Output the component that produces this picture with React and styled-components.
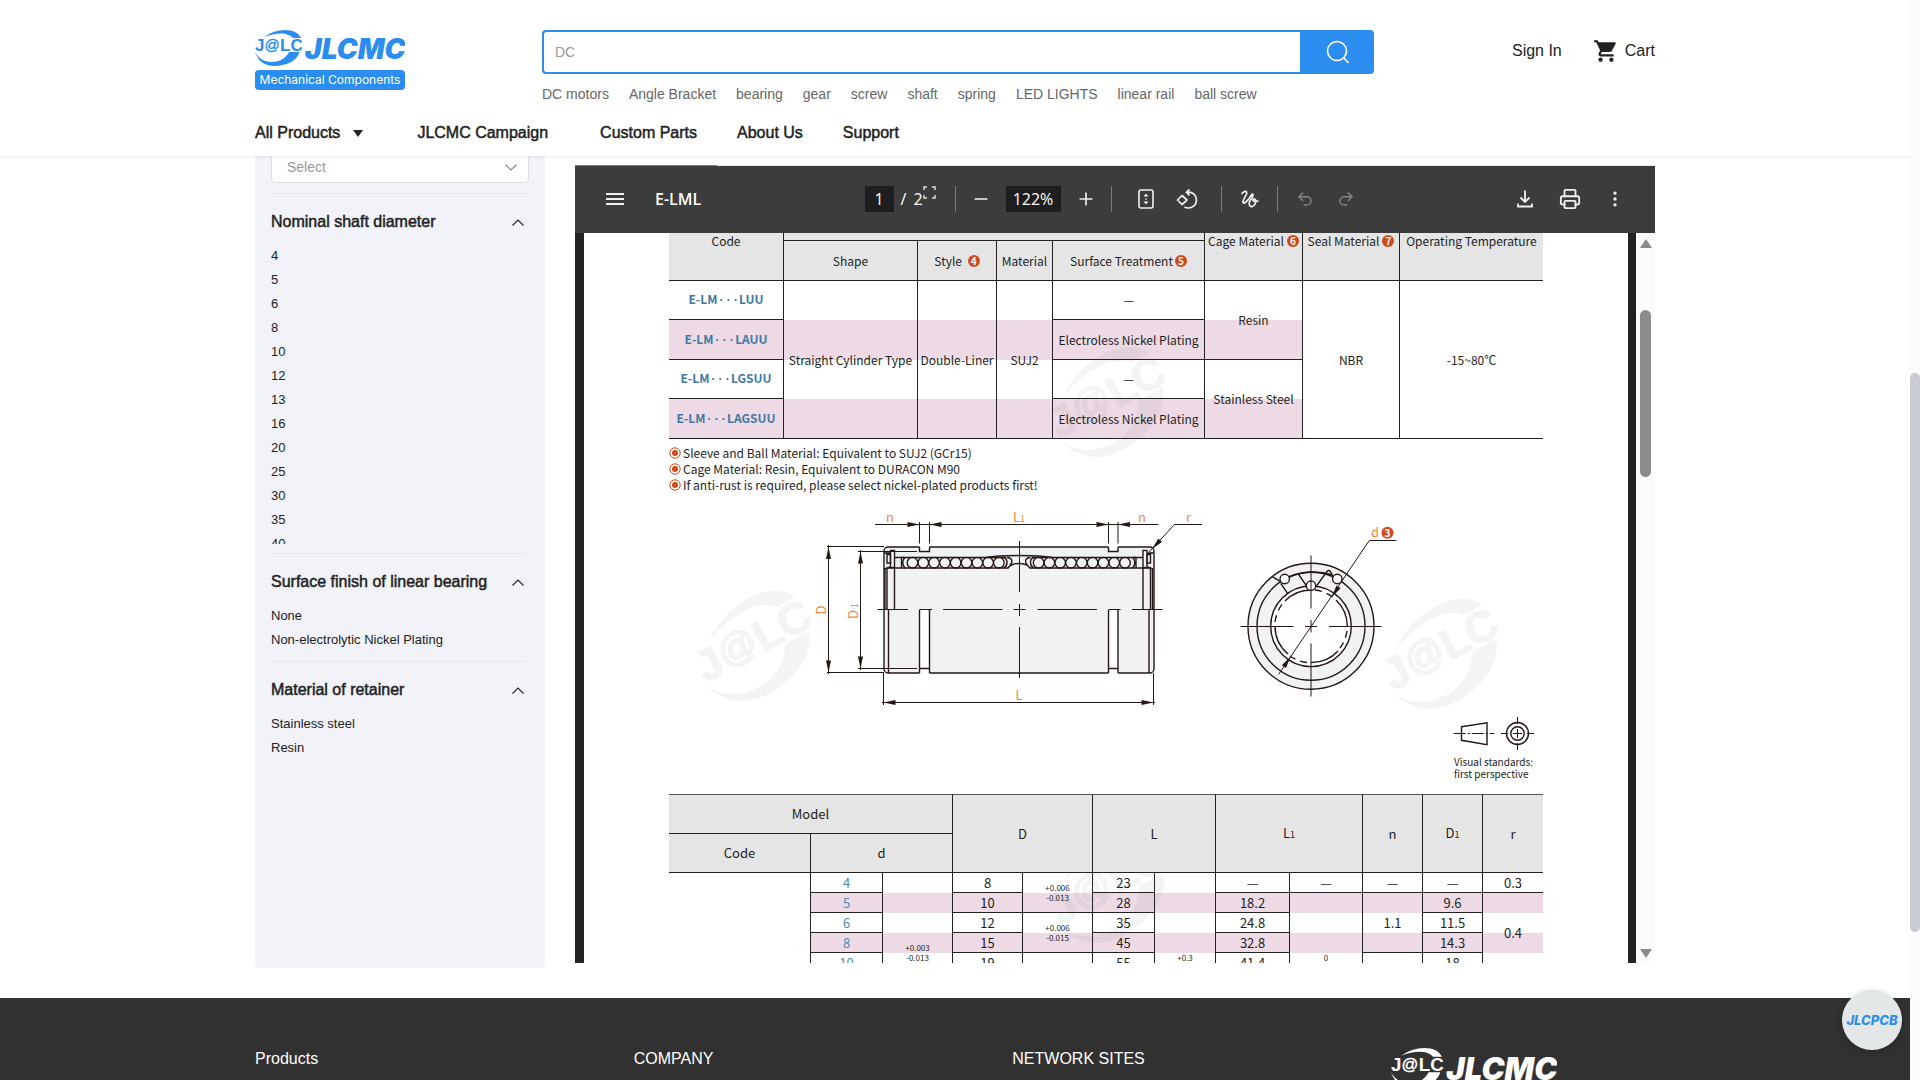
import React from 'react';
import styled, { createGlobalStyle, css } from 'styled-components';
import { MdShoppingCart } from 'react-icons/md';
import { Minus, Plus, Undo2, Redo2, Printer, EllipsisVertical } from 'lucide-react';

const BLUE = '#2b8def';
const INK = '#231815';
const PINK = '#eedae5';

const GlobalStyle = createGlobalStyle`
  * {
    box-sizing: border-box;
  }
  body {
    margin: 0;
    background: #fff;
    color: #222;
    font-family: 'Liberation Sans', Arial, sans-serif;
  }
  button, input, select {
    font-family: inherit;
  }
  button {
    border: 0;
    padding: 0;
    background: none;
    color: inherit;
    cursor: pointer;
  }
  ul {
    list-style: none;
    margin: 0;
    padding: 0;
  }
  a {
    color: inherit;
    text-decoration: none;
  }
`;

const Shell = styled.div`
  display: flex;
  height: 100vh;
  overflow: hidden;
`;

const Page = styled.div`
  position: relative;
  flex: 1;
  min-width: 0;
  overflow: hidden;
`;

const Container = styled.div`
  max-width: 1400px;
  margin: 0 auto;
`;

/* ---------- header ---------- */

const Header = styled.header`
  position: relative;
  z-index: 5;
  height: 156px;
  padding-top: 30px;
  background: #fff;
  box-shadow: 0 1px 3px rgba(0, 0, 0, 0.08);
`;

const HeaderTop = styled.div`
  display: flex;
  align-items: flex-start;
  height: 80px;
`;

const Brand = styled.a`
  display: flex;
  flex-direction: column;
  gap: 4px;
  width: 150px;
  margin-right: 137px;
`;

const BrandTag = styled.span`
  height: 20px;
  border-radius: 4px;
  background: ${BLUE};
  color: #fff;
  font-family: Inter, sans-serif;
  font-size: 12px;
  line-height: 20px;
  text-align: center;
  white-space: nowrap;
`;

const SearchColumn = styled.div`
  flex: 0 1 832px;
`;

const SearchForm = styled.form`
  display: flex;
  height: 44px;
`;

const SearchInput = styled.input`
  flex: 1;
  min-width: 0;
  padding: 0 11px;
  border: 2px solid ${BLUE};
  border-right: 0;
  border-radius: 4px 0 0 4px;
  font-size: 14px;
  outline: none;
  &::placeholder {
    color: #999;
  }
`;

const SearchButton = styled.button`
  display: flex;
  align-items: center;
  justify-content: center;
  width: 74px;
  border-radius: 0 4px 4px 0;
  background: ${BLUE};
`;

const HotWords = styled.div`
  display: flex;
  gap: 20px;
  margin-top: 10px;
  color: #666;
  font-size: 14px;
  line-height: 20px;
`;

const Account = styled.div`
  display: flex;
  align-items: center;
  gap: 6px;
  height: 42px;
  margin-left: auto;
  font-size: 16px;
`;

const SignIn = styled.a`
  margin-right: 25px;
`;

const Nav = styled.nav`
  display: flex;
  gap: 40px;
  margin-top: 13px;
  font-size: 16px;
  line-height: 20px;
`;

const NavLink = styled.a`
  display: flex;
  align-items: center;
  gap: 13px;
  -webkit-text-stroke: 0.03em currentColor;
  padding: ${p => (p.$wide ? '0 12px 0 14px' : '0')};
`;

const Caret = styled.span`
  border: 5px solid transparent;
  border-top: 7px solid #222;
  border-bottom: 0;
`;

/* ---------- filters ---------- */

const Content = styled(Container)`
  display: flex;
  gap: 30px;
  margin-top: -8px;
  padding-bottom: 30px;
`;

const Sidebar = styled.aside`
  flex: 0 0 290px;
  padding: 3px 16px 0;
  border-radius: 4px;
  background: #f1f3f8;
`;

const SelectRow = styled.div`
  padding-bottom: 10px;
  border-bottom: 1px solid #e4e6eb;
`;

const SelectBox = styled.label`
  display: flex;
  align-items: center;
  position: relative;
  color: #888;
  svg {
    position: absolute;
    right: 12px;
    pointer-events: none;
  }
`;

const Select = styled.select`
  appearance: none;
  width: 100%;
  height: 32px;
  padding: 0 15px;
  border: 1px solid #dcdfe6;
  border-radius: 4px;
  background: #fff;
  color: #999;
  font-size: 14px;
`;

const FilterSection = styled.section`
  margin-right: 3px;
  padding: 18px 0 9px;
  & + & {
    border-top: 1px solid #e4e6eb;
  }
`;

const FilterTitle = styled.button`
  display: flex;
  align-items: center;
  justify-content: space-between;
  width: 100%;
  height: 20px;
  margin-bottom: 12px;
  padding-right: 2px;
  font-size: 16px;
  -webkit-text-stroke: 0.03em currentColor;
`;

const FilterList = styled.ul`
  max-height: 300px;
  overflow: hidden;
`;

const FilterItem = styled.button`
  display: block;
  height: 24px;
  font-size: 13px;
  line-height: 24px;
`;

/* ---------- pdf viewer ---------- */

const Viewer = styled.main`
  flex: 1;
  min-width: 0;
  margin-top: 17px;
  padding-bottom: 5px;
`;

const TabLine = styled.div`
  height: 1px;
  background: linear-gradient(to right, ${BLUE} 142px, #e4e7ed 142px);
`;

const Toolbar = styled.div`
  display: flex;
  align-items: center;
  height: 67px;
  padding: 0 24px 2px;
  background: #3c3c3c;
  color: #fff;
  font-family: 'Open Sans', 'Noto Sans', sans-serif;
  font-size: 16px;
`;

const ToolbarSide = styled.div`
  display: flex;
  flex: 1;
  align-items: center;
  justify-content: ${p => (p.$end ? 'flex-end' : 'flex-start')};
  gap: ${p => (p.$end ? '13px' : '24px')};
`;

const DocTitle = styled.span`
  font-weight: 600;
`;

const ToolbarCenter = styled.div`
  display: flex;
  align-items: center;
  gap: 9px;
  padding-right: 4px;
`;

const PageNav = styled.div`
  position: relative;
  display: flex;
  align-items: center;
  gap: 7px;
  width: 81px;
`;

const DarkInput = styled.input`
  width: ${p => p.$w}px;
  height: 26px;
  padding: 0;
  border: 0;
  background: #1e1e1e;
  color: #fff;
  font-size: 16px;
  text-align: center;
`;

const FullscreenMark = styled.svg`
  position: absolute;
  left: 58px;
  top: 0;
`;

const ToolButton = styled.button`
  display: flex;
  align-items: center;
  justify-content: center;
  width: 32px;
  height: 32px;
  color: ${p => (p.$off ? '#858585' : '#f0f0f0')};
`;

const Separator = styled.span`
  width: 1px;
  height: 26px;
  margin: 0 ${p => p.$after || 0}px 0 ${p => p.$before || 0}px;
  background: #7a7a7a;
`;

const Stage = styled.div`
  display: flex;
  height: calc(100vh - 350px);
  padding-left: 9px;
  background: #232323;
  overflow: hidden;
`;

const Sheet = styled.article`
  position: relative;
  flex: 1;
  min-width: 0;
  height: 900px;
  margin-top: -32px;
  padding: 0 85px;
  background: #fff;
  color: #221e1f;
  font-family: 'Noto Sans CJK SC', sans-serif;
  font-size: 12px;
`;

const StageScroll = styled.div`
  display: flex;
  flex-direction: column;
  align-items: center;
  width: 19px;
  margin-left: 8px;
  padding: 6px 0 5px;
  background: #fcfcfc;
`;

const StageThumb = styled.div`
  width: 11px;
  height: 167px;
  margin: 62px 0 auto;
  border-radius: 6px;
  background: #8b8b8b;
`;

const Arrow = styled.span`
  border: 6px solid transparent;
  ${p => (p.$up ? 'border-top: 0; border-bottom: 9px solid #8b8b8b;' : 'border-bottom: 0; border-top: 9px solid #8b8b8b;')}
`;

const SpecTable = styled.table`
  width: 100%;
  table-layout: fixed;
  border-spacing: 0;
  font-size: ${p => (p.$large ? '13px' : '12px')};
  line-height: 16px;
  text-align: center;
`;

const TypeBody = styled.tbody`
  tr {
    height: 39px;
  }
  tr:nth-child(even) {
    height: 40px;
  }
`;

const SizeBody = styled.tbody`
  tr {
    height: 20px;
  }
`;

const Th = styled.th`
  position: relative;
  z-index: 2;
  height: ${p => p.$h || 40}px;
  padding: 0;
  border-bottom: 1px solid #222;
  border-left: ${p => (p.$first ? '0' : '1px solid #222')};
  border-top: ${p => (p.$top ? '1px solid #555' : '0')};
  background: #e5e5e5;
  font-weight: 400;
  white-space: nowrap;
`;

// cells that span several rows keep the row striping through a gradient
const stripes = {
  tall: `repeating-linear-gradient(transparent 0 39px, ${PINK} 39px 79px)`,
  even: `repeating-linear-gradient(transparent 0 20px, ${PINK} 20px 40px)`,
  odd: `repeating-linear-gradient(${PINK} 0 20px, transparent 20px 40px)`,
  pink: PINK,
};

const Td = styled.td`
  padding: 0;
  border-bottom: 1px solid #222;
  border-left: ${p => (p.$first ? '0' : '1px solid #222')};
  background: ${p => stripes[p.$bg] || 'none'};
  white-space: nowrap;
  ${p => p.$code && css`
    color: #4179a3;
    font-weight: 700;
  `}
  ${p => p.$size && css`
    color: #4f8cb5;
  `}
  ${p => p.$tol && css`
    font-size: 8px;
    line-height: 10px;
  `}
`;

const Dots = styled.span`
  font-family: 'Liberation Mono', monospace;
`;

const Sub = styled.span`
  font-size: 9px;
`;

const Badge = styled.span`
  display: inline-block;
  width: 12px;
  height: 12px;
  margin-left: ${p => (p.$tight ? '2px' : '3px')};
  border-radius: 50%;
  background: #d2491a;
  color: #fff;
  font-size: 10px;
  font-weight: 700;
  line-height: 12px;
  vertical-align: 1px;
`;

const Notes = styled.ul`
  margin-top: 6px;
  line-height: 16px;
`;

const Note = styled.li`
  display: flex;
  align-items: center;
  gap: 2px;
`;

const Figure = styled.figure`
  margin: 7px 0 14px;
`;

const Drawing = styled.svg`
  display: block;
  width: 100%;
  height: 256px;
`;

const Caption = styled.figcaption`
  width: 89px;
  margin-left: auto;
  font-size: 10px;
  line-height: 12px;
  white-space: nowrap;
`;

const WatermarkSvg = styled.svg`
  position: absolute;
  z-index: 1;
  left: ${p => p.$x}px;
  top: ${p => p.$y}px;
  pointer-events: none;
`;

/* ---------- footer ---------- */

const Footer = styled.footer`
  height: 200px;
  padding-top: 50px;
  background: #313131;
  color: #fff;
`;

const FooterColumns = styled(Container)`
  display: flex;
  justify-content: space-between;
`;

const FooterColumn = styled.div`
  width: 264px;
  font-size: 16px;
  line-height: 22px;
`;

const PcbButton = styled.a`
  position: absolute;
  z-index: 6;
  right: 8px;
  bottom: 30px;
  display: flex;
  align-items: center;
  justify-content: center;
  width: 60px;
  height: 60px;
  border-radius: 50%;
  background: #e3e7e8;
  box-shadow: 0 2px 6px rgba(0, 0, 0, 0.2);
  color: ${BLUE};
  font-family: Inter, sans-serif;
  font-size: 13px;
  font-style: italic;
  font-weight: 800;
`;

const PageScroll = styled.div`
  display: flex;
  flex-direction: column;
  width: 10px;
  background: #fcfcfc;
`;

const PageThumb = styled.div`
  height: 559px;
  margin-top: 373px;
  border-radius: 5px;
  background: #c8cbd2;
`;

/* ---------- drawings ---------- */

function Chevron({ down }) {
  return (
    <svg width="12" height="7" viewBox="0 0 12 7" fill="none" stroke="currentColor" strokeWidth="1.1">
      <path d={down ? 'M0.5 0.5 L6 6 L11.5 0.5' : 'M0.5 6.5 L6 1 L11.5 6.5'} />
    </svg>
  );
}

function JalcMark({ color, bold = 0 }) {
  return (
    <g fill={color}>
      <path d="M9 7 Q19 0 30 0 C38 0 44 3 46 8 L38 8 Q34 3.5 26 3.5 Q18 3.5 9 7 Z" />
      <path d="M0 22 C3 31 10 36 19 36 C31 36 42 31 44.5 22 L34 22 C31 28 25 32 17 32 C9 32 3 28 0 22 Z" />
      <g fontFamily="Liberation Sans" stroke={color}>
        <text x="0" y="21" fontWeight="700" fontSize="17" strokeWidth={bold}>J</text>
        <text x="9.5" y="19.5" fontSize="15" strokeWidth={0.4 + bold}>@</text>
        <text x="25" y="21" fontWeight="700" fontSize="17" strokeWidth={bold}>LC</text>
      </g>
    </g>
  );
}

function Logo({ color, width }) {
  return (
    <svg width={width} viewBox="0 0 150 36" role="img" aria-label="JLCMC">
      <JalcMark color={color} />
      <text x="50" y="29" fontFamily="Inter" fontStyle="italic" fontWeight="900" fontSize="28" fill={color}>
        JLCMC
      </text>
    </svg>
  );
}

function Watermark({ x, y }) {
  return (
    <WatermarkSvg $x={x} $y={y} width="140" height="130" viewBox="0 0 140 130" opacity="0.05">
      <g transform="translate(70 65) rotate(-28) scale(2.6) translate(-24 -18)">
        <JalcMark color="#2a4a42" bold={0.5} />
      </g>
    </WatermarkSvg>
  );
}

// filled arrow head with its tip at x,y; angle 0 points to the right
function Tip({ x, y, angle = 0, size = 12 }) {
  return <path d={`M0 0 L${-size} -2.5 L${-size} 2.5 Z`} fill={INK} stroke="none" transform={`translate(${x} ${y}) rotate(${angle})`} />;
}

function EndCap() {
  return (
    <g>
      <path d="M887 568 V610 M894.5 568 V610" />
      <rect x="890.5" y="550.5" width="4" height="17" fill="#fff" />
      <path d="M884 553 H890 M887 554.5 H890.5 V563 H887 Z M884.5 569 L890 567" />
      <path d="M894.5 557.5 H904 M901.5 557.5 V568 M905 557.5 C902 560 902 565 905 568 M885 568 V610" />
      <path d="M888.5 610 V673" />
    </g>
  );
}

function BearingDrawing() {
  const leftBalls = [912.5, 923.3, 934.1, 944.9, 955.7, 966.5, 977.3, 988.1, 998.9];
  const rightBalls = leftBalls.map(x => 2037.5 - x);
  return (
    <Drawing viewBox="669 500 874 256" fill="none" stroke={INK} strokeWidth="1.4">
      <rect x="884" y="547" width="270" height="126" rx="4" fill="#f2f2f2" />
      <g fill="#fff" stroke="none">
        <rect x="919.5" y="546" width="10" height="5.5" />
        <rect x="1108.5" y="546" width="9.5" height="5.5" />
        <rect x="919.5" y="610" width="10" height="64" />
        <rect x="1108.5" y="610" width="9.5" height="64" />
      </g>
      <path d="M919.5 547 V551.5 H929.5 V547 M1108.5 547 V551.5 H1118 V547" />
      <path d="M919.5 610 V673 M929.5 610 V673 M919.5 668.5 H929.5 M1108.5 610 V673 M1118 610 V673 M1108.5 668.5 H1118" />

      <EndCap />
      <g transform="translate(2037.5 0) scale(-1 1)">
        <EndCap />
      </g>
      <path d="M901 557.5 H1006 M1032 557.5 H1136 M887 568 H1008 C1012 562 1026 562 1030 568 H1151" />
      <path d="M986 557.5 Q996 555.5 1019 555.5 Q1042 555.5 1052 557.5" />
      {leftBalls.concat(rightBalls).map(x => (
        <circle key={x} cx={x} cy="562.7" r="5.3" />
      ))}
      <path d="M1004 557.5 C1008 559 1008 566 1004 568 M1007 557.5 C1013 558 1013 562 1010 565" />
      <path d="M1033.5 557.5 C1029.5 559 1029.5 566 1033.5 568 M1030.5 557.5 C1024.5 558 1024.5 562 1027.5 565" />

      <g strokeWidth="1">
        <path d="M877.5 609.5 H908 M919.5 609.5 H932 M943 609.5 H1002.5 M1013.5 609.5 H1025.5 M1037.5 609.5 H1097 M1108.5 609.5 H1120.5 M1132 609.5 H1162.5" />
        <path d="M1019.5 541 V592 M1019.5 604 V616 M1019.5 627 V678" />
        <path d="M875 524.5 H1158.5 M919.5 522 V543.5 M929.5 522 V543.5 M1108.5 522 V543.5 M1118 522 V543.5" />
        <path d="M827 546.5 H884 M827 672.5 H884 M828.5 545 V674" />
        <path d="M858 551.5 H917 M858 668.5 H917 M860.5 550 V670" />
        <path d="M883.5 673 V705 M1153.5 673 V705 M882 702.5 H1155" />
        <path d="M1202 524.5 H1174.5 L1149 552" />
      </g>
      <Tip x={919.5} y={524.5} />
      <Tip x={929.5} y={524.5} angle={180} />
      <Tip x={1108.5} y={524.5} />
      <Tip x={1118} y={524.5} angle={180} />
      <Tip x={828.5} y={547} angle={-90} />
      <Tip x={828.5} y={672.5} angle={90} />
      <Tip x={860.5} y={551.5} angle={-90} />
      <Tip x={860.5} y={668.5} angle={90} />
      <Tip x={883.5} y={702.5} angle={180} />
      <Tip x={1153.5} y={702.5} />
      <Tip x={1152} y={549} angle={133} />

      <circle cx="1311" cy="626.3" r="63" fill="#f2f2f2" />
      <circle cx="1311" cy="626.3" r="54" />
      <circle cx="1311" cy="626.3" r="40.3" fill="#fff" />
      <path d="M1275 626.3 A36.3 36.3 0 0 0 1288 654 M1285 601 A36.3 36.3 0 0 1 1311 590 M1336 600 A36.3 36.3 0 0 1 1347.3 626 M1338 651 A36.3 36.3 0 0 1 1311 662.5" />
      <path d="M1275 622 A36.3 36.3 0 0 1 1284 602 M1315 590 A36.3 36.3 0 0 1 1334 598 M1347 631 A36.3 36.3 0 0 1 1340 648 M1307 662.5 A36.3 36.3 0 0 1 1290 656" strokeDasharray="7 5" />
      <path d="M1272.3 576.7 L1280.7 581.7 M1280.7 583.3 L1287.7 593.7 M1289.3 577 Q1311 568 1333 575 M1298.3 574 L1307 586.7 M1316 586.7 L1327 571.5 Q1329 569 1331 572.5 L1333.3 577.3" />
      <g fill="#fff">
        <circle cx="1284.7" cy="579" r="4.7" />
        <circle cx="1337.3" cy="579" r="4.7" />
        <circle cx="1311" cy="585.7" r="4.7" />
      </g>
      <g strokeWidth="1">
        <path d="M1311 555.5 V608.5 M1311 620 V632.5 M1311 643.5 V696.5 M1240.5 626.5 H1293.5 M1305 626.5 H1317 M1329 626.5 H1381.5" />
        <path d="M1278.7 674.3 L1369.3 540.5 H1396.5" />
      </g>
      <Tip x={1332} y={597} angle={123} />
      <Tip x={1290.5} y={656.5} angle={-57} />

      <path d="M1461.5 726.7 L1487 722.7 V744.7 L1461.5 740.3 Z" />
      <path d="M1453.7 733.5 H1494.3" strokeDasharray="12 2 2 2" strokeWidth="1" />
      <circle cx="1517.5" cy="733.5" r="11" />
      <circle cx="1517.5" cy="733.5" r="6.7" />
      <path d="M1501 733.5 H1508 M1513 733.5 H1522 M1527 733.5 H1534 M1517.5 717 V724 M1517.5 729 V738 M1517.5 743 V750" strokeWidth="1" />

      <g fill="#f0883c" stroke="none" fontSize="13" textAnchor="middle">
        <text x="890" y="522">n</text>
        <text x="1019" y="522">L<tspan fontSize="9">1</tspan></text>
        <text x="1142" y="522">n</text>
        <text x="1188.5" y="522">r</text>
        <text x="1019" y="700">L</text>
        <text transform="translate(826 610) rotate(-90)">D</text>
        <text transform="translate(858 611) rotate(-90)">D<tspan fontSize="9"> 1</tspan></text>
        <text x="1375" y="537">d</text>
      </g>
      <circle cx="1387.5" cy="532.7" r="6" fill="#d2491a" stroke="none" />
      <text x="1387.5" y="536.5" fontSize="10" fontWeight="700" fill="#fff" stroke="none" textAnchor="middle">3</text>
    </Drawing>
  );
}

function RingBullet() {
  return (
    <svg width="12" height="12" viewBox="0 0 12 12" aria-hidden="true">
      <circle cx="6" cy="6" r="5.2" fill="none" stroke="#d2491a" />
      <circle cx="6" cy="6" r="3" fill="#d2491a" />
    </svg>
  );
}

/* ---------- page parts ---------- */

const hotWords = ['DC motors', 'Angle Bracket', 'bearing', 'gear', 'screw', 'shaft', 'spring', 'LED LIGHTS', 'linear rail', 'ball screw'];

const filters = [
  { title: 'Nominal shaft diameter', items: ['4', '5', '6', '8', '10', '12', '13', '16', '20', '25', '30', '35', '40'] },
  { title: 'Surface finish of linear bearing', items: ['None', 'Non-electrolytic Nickel Plating'] },
  { title: 'Material of retainer', items: ['Stainless steel', 'Resin'] },
];

const typeColumns = [114, 134, 79, 56, 152, 98, 97, 144];
const sizeColumns = [141, 72, 70, 70, 70, 62, 61, 74, 73, 60, 60, 61];

// d, D, L, L1, D1
const sizes = [
  ['4', '8', '23', '—', '—'],
  ['5', '10', '28', '18.2', '9.6'],
  ['6', '12', '35', '24.8', '11.5'],
  ['8', '15', '45', '32.8', '14.3'],
  ['10', '19', '55', '41.4', '18'],
  ['12', '21', '57', '43.4', '20'],
  ['13', '23', '61', '43.4', '22'],
  ['16', '28', '70', '49.4', '27'],
  ['20', '32', '80', '57.8', '30.5'],
];

function ModelCode({ suffix }) {
  return (
    <>
      E-LM<Dots>···</Dots>{suffix}
    </>
  );
}

function Tolerance({ upper, lower, ...rest }) {
  return (
    <Td $tol {...rest}>
      {upper}
      <br />
      {lower}
    </Td>
  );
}

function SiteHeader() {
  return (
    <Header>
      <Container>
        <HeaderTop>
          <Brand href="#">
            <Logo color={BLUE} width={150} />
            <BrandTag>Mechanical Components</BrandTag>
          </Brand>
          <SearchColumn>
            <SearchForm>
              <SearchInput placeholder="DC" aria-label="Search products" />
              <SearchButton type="button" aria-label="Search">
                <svg width="24" height="24" viewBox="0 0 24 24" fill="none" stroke="#fff" strokeWidth="1.6">
                  <circle cx="12" cy="11" r="9.5" />
                  <path d="M19 18 L23 22.5" strokeLinecap="round" />
                </svg>
              </SearchButton>
            </SearchForm>
            <HotWords>
              {hotWords.map(word => (
                <a key={word} href="#">{word}</a>
              ))}
            </HotWords>
          </SearchColumn>
          <Account>
            <SignIn href="#">Sign In</SignIn>
            <MdShoppingCart size={26} />
            <a href="#">Cart</a>
          </Account>
        </HeaderTop>
        <Nav>
          <NavLink href="#">All Products <Caret /></NavLink>
          <NavLink href="#" $wide>JLCMC Campaign</NavLink>
          <NavLink href="#">Custom Parts</NavLink>
          <NavLink href="#">About Us</NavLink>
          <NavLink href="#">Support</NavLink>
        </Nav>
      </Container>
    </Header>
  );
}

function Filters() {
  return (
    <Sidebar>
      <SelectRow>
        <SelectBox>
          <Select aria-label="Filter value">
            <option>Select</option>
          </Select>
          <Chevron down />
        </SelectBox>
      </SelectRow>
      {filters.map(group => (
        <FilterSection key={group.title}>
          <FilterTitle>
            {group.title}
            <Chevron />
          </FilterTitle>
          <FilterList>
            {group.items.map(item => (
              <li key={item}>
                <FilterItem>{item}</FilterItem>
              </li>
            ))}
          </FilterList>
        </FilterSection>
      ))}
    </Sidebar>
  );
}

function PdfToolbar() {
  return (
    <Toolbar>
      <ToolbarSide>
        <ToolButton aria-label="Contents">
          <svg width="18" height="14" viewBox="0 0 18 14" stroke="currentColor" strokeWidth="2">
            <path d="M0 2 H18 M0 7 H18 M0 12 H18" />
          </svg>
        </ToolButton>
        <DocTitle>E-LML</DocTitle>
      </ToolbarSide>
      <ToolbarCenter>
        <PageNav>
          <DarkInput $w={29} defaultValue="1" aria-label="Page" />
          <span>/</span>
          <span>2</span>
          <FullscreenMark width="13" height="13" viewBox="0 0 13 13" fill="none" stroke="#ddd" strokeWidth="1.5">
            <path d="M1 4 V1 H4 M9 1 H12 V4 M12 9 V12 H9 M4 12 H1 V9" />
          </FullscreenMark>
        </PageNav>
        <Separator />
        <ToolButton aria-label="Zoom out"><Minus size={20} strokeWidth={2} /></ToolButton>
        <DarkInput $w={55} defaultValue="122%" aria-label="Zoom" />
        <ToolButton aria-label="Zoom in"><Plus size={20} strokeWidth={2} /></ToolButton>
        <Separator $after={9} />
        <ToolButton aria-label="Fit to page">
          <svg width="16" height="20" viewBox="0 0 16 20" fill="none" stroke="currentColor" strokeWidth="1.6">
            <rect x="1" y="1" width="14" height="18" rx="2" />
            <path d="M5.5 7.5 L8 4.5 L10.5 7.5 Z M5.5 12.5 L8 15.5 L10.5 12.5 Z" fill="currentColor" stroke="none" />
            <path d="M8 9 V11" strokeWidth="1" />
          </svg>
        </ToolButton>
        <ToolButton aria-label="Rotate">
          <svg width="22" height="20" viewBox="0 0 22 20" fill="none" stroke="currentColor" strokeWidth="1.7">
            <path d="M6 6.5 L11 11 L6 15.5 L1.5 11 Z" strokeLinejoin="round" />
            <path d="M11 3.2 C17 2.5 20.5 6.5 20.5 11 C20.5 16 16.5 19 12 19 C10.5 19 9.5 18.6 8.5 18" />
            <path d="M13.5 0.5 L10.5 3.3 L13.5 6.3" />
          </svg>
        </ToolButton>
        <Separator $before={9} $after={3} />
        <ToolButton aria-label="Draw">
          <svg width="18" height="18" viewBox="0 0 18 18" fill="none" stroke="currentColor" strokeWidth="1.7" strokeLinecap="round">
            <path d="M1 3.5 C3 0.5 6.5 0.5 5.5 4 C4.5 7 1.5 10 2 12.5 C3 15 8.5 8.5 10 5.5 C12.5 2 13 6 9.5 10 C7 13.5 8.5 17.5 11.5 16.5 C15 15 16 9.5 13.5 9 C11 9 11 12.5 17 11" />
          </svg>
        </ToolButton>
        <Separator $before={2} $after={2} />
        <ToolButton $off aria-label="Undo"><Undo2 size={18} strokeWidth={2} /></ToolButton>
        <ToolButton $off aria-label="Redo"><Redo2 size={18} strokeWidth={2} /></ToolButton>
      </ToolbarCenter>
      <ToolbarSide $end>
        <ToolButton aria-label="Download">
          <svg width="16" height="18" viewBox="0 0 16 18" fill="none" stroke="currentColor" strokeWidth="1.8">
            <path d="M8 0.5 V12 M3.5 7.5 L8 12 L12.5 7.5 M1 13.5 V16.5 H15 V13.5" />
          </svg>
        </ToolButton>
        <ToolButton aria-label="Print"><Printer size={22} strokeWidth={2} /></ToolButton>
        <ToolButton aria-label="More"><EllipsisVertical size={20} strokeWidth={2} /></ToolButton>
      </ToolbarSide>
    </Toolbar>
  );
}

function TypeTable() {
  return (
    <SpecTable>
      <colgroup>
        {typeColumns.map((w, i) => <col key={i} width={w} />)}
      </colgroup>
      <thead>
        <tr>
          <Th $first rowSpan={2}>Code</Th>
          <Th colSpan={4} />
          <Th rowSpan={2}>Cage Material<Badge>6</Badge></Th>
          <Th rowSpan={2}>Seal Material<Badge>7</Badge></Th>
          <Th rowSpan={2}>Operating Temperature</Th>
        </tr>
        <tr>
          <Th>Shape</Th>
          <Th>Style <Badge>4</Badge></Th>
          <Th>Material</Th>
          <Th>Surface Treatment<Badge $tight>5</Badge></Th>
        </tr>
      </thead>
      <TypeBody>
        <tr>
          <Td $first $code><ModelCode suffix="LUU" /></Td>
          <Td rowSpan={4} $bg="tall">Straight Cylinder Type</Td>
          <Td rowSpan={4} $bg="tall">Double-Liner</Td>
          <Td rowSpan={4} $bg="tall">SUJ2</Td>
          <Td>—</Td>
          <Td rowSpan={2} $bg="tall">Resin</Td>
          <Td rowSpan={4}>NBR</Td>
          <Td rowSpan={4}>-15~80℃</Td>
        </tr>
        <tr>
          <Td $first $code $bg="pink"><ModelCode suffix="LAUU" /></Td>
          <Td $bg="pink">Electroless Nickel Plating</Td>
        </tr>
        <tr>
          <Td $first $code><ModelCode suffix="LGSUU" /></Td>
          <Td>—</Td>
          <Td rowSpan={2} $bg="tall">Stainless Steel</Td>
        </tr>
        <tr>
          <Td $first $code $bg="pink"><ModelCode suffix="LAGSUU" /></Td>
          <Td $bg="pink">Electroless Nickel Plating</Td>
        </tr>
      </TypeBody>
    </SpecTable>
  );
}

function SizeTable() {
  return (
    <SpecTable $large>
      <colgroup>
        {sizeColumns.map((w, i) => <col key={i} width={w} />)}
      </colgroup>
      <thead>
        <tr>
          <Th $first $top colSpan={3}>Model</Th>
          <Th $top rowSpan={2} colSpan={2}>D</Th>
          <Th $top rowSpan={2} colSpan={2}>L</Th>
          <Th $top rowSpan={2} colSpan={2}>L<Sub>1</Sub></Th>
          <Th $top rowSpan={2}>n</Th>
          <Th $top rowSpan={2}>D<Sub>1</Sub></Th>
          <Th $top rowSpan={2}>r</Th>
        </tr>
        <tr>
          <Th $first $h={39}>Code</Th>
          <Th $h={39} colSpan={2}>d</Th>
        </tr>
      </thead>
      <SizeBody>
        {sizes.map(([d, outer, length, l1, d1], i) => {
          const bg = i === 1 || i === 3 ? 'pink' : undefined;
          return (
            <tr key={d}>
              {i === 0 && <Td $first rowSpan={9} />}
              <Td $size $bg={bg}>{d}</Td>
              {i === 0 && <Tolerance rowSpan={8} $bg="even" upper="+0.003" lower="-0.013" />}
              {i === 8 && <Td />}
              <Td $bg={bg}>{outer}</Td>
              {i === 0 && <Tolerance rowSpan={2} $bg="even" upper="+0.006" lower="-0.013" />}
              {i === 2 && <Tolerance rowSpan={2} $bg="even" upper="+0.006" lower="-0.015" />}
              {i === 4 && <Td rowSpan={5} />}
              <Td $bg={bg}>{length}</Td>
              {i === 0 && <Tolerance rowSpan={9} $bg="even" upper="+0.3" lower="-0.3" />}
              <Td $bg={bg}>{l1}</Td>
              {i === 0 && <Td>—</Td>}
              {i === 1 && <Tolerance rowSpan={7} $bg="odd" upper="0" lower="-0.2" />}
              {i === 8 && <Td />}
              {i === 0 && <Td>—</Td>}
              {i === 1 && <Td rowSpan={3} $bg="odd">1.1</Td>}
              {i === 4 && <Td rowSpan={5} />}
              <Td $bg={bg}>{d1}</Td>
              {i === 0 && <Td>0.3</Td>}
              {i === 1 && <Td rowSpan={4} $bg="odd">0.4</Td>}
              {i === 5 && <Td rowSpan={4} />}
            </tr>
          );
        })}
      </SizeBody>
    </SpecTable>
  );
}

function App() {
  return (
    <Shell>
      <GlobalStyle />
      <Page>
        <SiteHeader />
        <Content>
          <Filters />
          <Viewer>
            <TabLine />
            <PdfToolbar />
            <Stage>
              <Sheet>
                <TypeTable />
                <Notes>
                  <Note><RingBullet />Sleeve and Ball Material: Equivalent to SUJ2 (GCr15)</Note>
                  <Note><RingBullet />Cage Material: Resin, Equivalent to DURACON M90</Note>
                  <Note><RingBullet />If anti-rust is required, please select nickel-plated products first!</Note>
                </Notes>
                <Figure>
                  <BearingDrawing />
                  <Caption>
                    Visual standards:
                    <br />
                    first perspective
                  </Caption>
                </Figure>
                <SizeTable />
                <Watermark x={457} y={137} />
                <Watermark x={103} y={381} />
                <Watermark x={790} y={389} />
                <Watermark x={457} y={623} />
              </Sheet>
              <StageScroll>
                <Arrow $up />
                <StageThumb />
                <Arrow />
              </StageScroll>
            </Stage>
          </Viewer>
        </Content>
        <Footer>
          <FooterColumns>
            <FooterColumn>Products</FooterColumn>
            <FooterColumn>COMPANY</FooterColumn>
            <FooterColumn>NETWORK SITES</FooterColumn>
            <FooterColumn>
              <Logo color="#fff" width={166} />
            </FooterColumn>
          </FooterColumns>
        </Footer>
        <PcbButton href="#">JLCPCB</PcbButton>
      </Page>
      <PageScroll>
        <PageThumb />
      </PageScroll>
    </Shell>
  );
}

export default App;
